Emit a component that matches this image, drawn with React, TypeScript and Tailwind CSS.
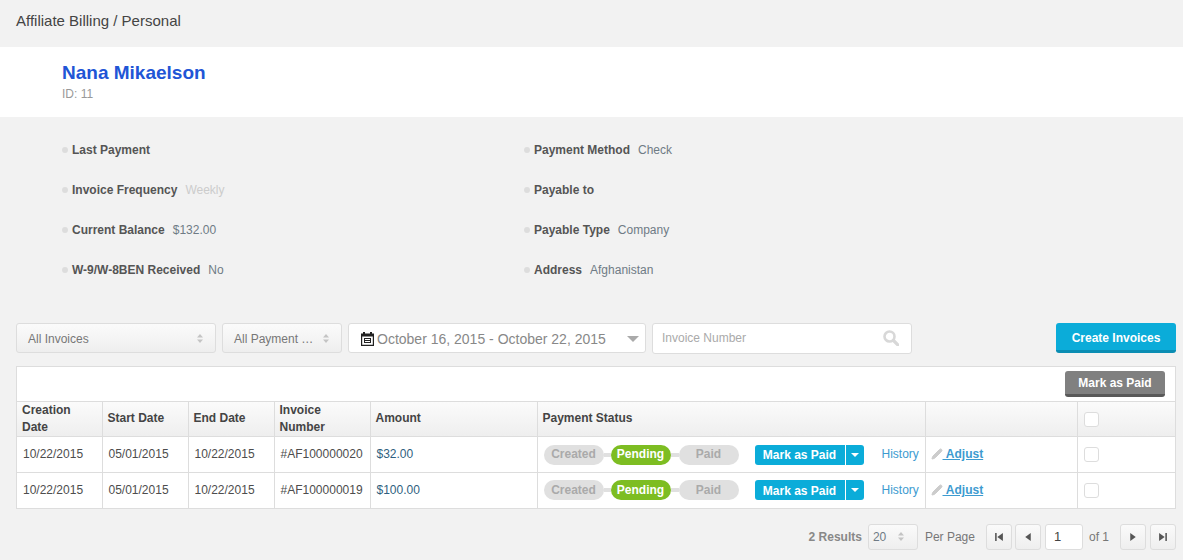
import React from "react";
import { Pencil } from "lucide-react";

const info = [
  [
    { label: "Last Payment", value: "" },
    { label: "Invoice Frequency", value: "Weekly", cls: "text-[#cccccc]" },
    { label: "Current Balance", value: "$132.00" },
    { label: "W-9/W-8BEN Received", value: "No" },
  ],
  [
    { label: "Payment Method", value: "Check" },
    { label: "Payable to", value: "" },
    { label: "Payable Type", value: "Company" },
    { label: "Address", value: "Afghanistan" },
  ],
];

const invoices = [
  { created: "10/22/2015", start: "05/01/2015", end: "10/22/2015", number: "#AF100000020", amount: "$32.00", height: "h-9" },
  { created: "10/22/2015", start: "05/01/2015", end: "10/22/2015", number: "#AF100000019", amount: "$100.00", height: "h-[35px]" },
];

const Updown = () => (
  <svg width="6" height="9" viewBox="0 0 6 9" className="shrink-0" fill="#c4c4c4">
    <path d="M3 0l3 3.4H0zM3 9L0 5.6h6z" />
  </svg>
);

const CalendarGlyph = () => (
  <svg width="13" height="14" viewBox="0 0 13 14" className="shrink-0" fill="#222222">
    <path d="M2 0h2v1.5h5V0h2v1.5h2V14H0V1.5h2zM1.2 4.5v8.3h10.6V4.5zM3 6h7v5H3zM4 7v1h5V7zm0 2v1h5V9z" fillRule="evenodd" />
  </svg>
);

const SearchGlyph = () => (
  <svg width="16" height="16" viewBox="0 0 16 16" fill="none" stroke="#d8d8d8" className="shrink-0">
    <circle cx="6.5" cy="6.5" r="5" strokeWidth="2.6" />
    <path d="M10.5 10.5l4.3 4.3" strokeWidth="3.2" strokeLinecap="round" />
  </svg>
);

const PagerButton = ({ d }: { d: string }) => (
  <button className="flex h-[26px] w-[26px] items-center justify-center rounded-[3px] border border-[#dddddd] bg-gradient-to-b from-[#fafafa] to-[#eeeeee]">
    <svg width="10" height="10" viewBox="0 0 9 9" fill="#555555">
      <path d={d} />
    </svg>
  </button>
);

const Stepper = () => (
  <div className="flex items-center">
    <span className="flex h-5 w-[60px] items-center justify-center rounded-full bg-[#e0e0e0] pb-px font-bold text-[#aaaaaa]">Created</span>
    <span className="h-1 w-[7px] bg-[#e0e0e0]" />
    <span className="flex h-5 w-[60px] items-center justify-center rounded-full bg-[#7dbd22] pb-px font-bold text-white">Pending</span>
    <span className="h-1 w-2 bg-[#e0e0e0]" />
    <span className="flex h-5 w-[60px] items-center justify-center rounded-full bg-[#e0e0e0] pb-px font-bold text-[#aaaaaa]">Paid</span>
  </div>
);

const Checkbox = () => <span className="block h-[15px] w-[15px] rounded-[3px] border border-[#dddddd] bg-white" />;

export default function App() {
  return (
    <div className="h-[560px] overflow-hidden bg-[#f2f2f2] font-['Liberation_Sans',Arial,sans-serif] text-xs text-[#666666]">
      <div className="flex h-[47px] items-center px-4 pb-[6px] text-[15px] text-[#444444]">Affiliate Billing / Personal</div>

      <div className="flex h-[70px] flex-col bg-white pl-[62px] pt-[14px]">
        <h1 className="text-[19px] font-bold leading-[24px] text-[#2155d6]">Nana Mikaelson</h1>
        <p className="pt-px text-xs leading-[16px] text-[#999999]">ID: 11</p>
      </div>

      <div className="flex pl-[62px] pt-[13px]">
        {info.map((col, i) => (
          <div key={i} className="w-[462px]">
            {col.map((row) => (
              <div key={row.label} className="flex h-10 items-center">
                <span className="mr-[4px] h-[6px] w-[6px] rounded-full bg-[#dddddd]" />
                <span className="font-bold text-[#555555]">{row.label}</span>
                {row.value && <span className={`ml-2 ${row.cls ?? "text-[#6f7b85]"}`}>{row.value}</span>}
              </div>
            ))}
          </div>
        ))}
      </div>

      <div className="mt-[33px] flex h-[30px] items-start pl-4 pr-[7px]">
        <div className="flex h-[30px] w-[200px] items-center justify-between rounded-[3px] border border-[#dddddd] bg-gradient-to-b from-[#fbfbfb] to-[#eeeeee] pl-[11px] pr-[12px] pt-px text-[#777777]">
          All Invoices
          <Updown />
        </div>
        <div className="ml-[6px] flex h-[30px] w-[120px] items-center justify-between rounded-[3px] border border-[#dddddd] bg-gradient-to-b from-[#fbfbfb] to-[#eeeeee] pl-[11px] pr-[12px] pt-px text-[#777777]">
          All Payment …
          <Updown />
        </div>
        <div className="ml-[6px] flex h-[30px] w-[298px] items-center rounded-[3px] border border-[#dddddd] bg-white pl-3 pr-[6px] pt-px text-sm text-[#888888]">
          <CalendarGlyph />
          <span className="ml-[3px]">October 16, 2015 - October 22, 2015</span>
          <span className="ml-auto h-0 w-0 border-x-[6px] border-t-[6px] border-x-transparent border-t-[#aaaaaa]" />
        </div>
        <div className="ml-[6px] flex h-[31px] w-[260px] items-center justify-between rounded-[3px] border border-[#dddddd] bg-white pb-[2px] pl-[9px] pr-3 text-[#aaaaaa]">
          Invoice Number
          <SearchGlyph />
        </div>
        <button className="ml-auto h-[30px] w-[120px] rounded-[3px] border-b-[3px] border-[#0a8db3] bg-[#0bacd9] pt-[2px] font-bold text-white">Create Invoices</button>
      </div>

      <div className="ml-4 mr-[7px] mt-[13px] border border-[#dddddd] bg-white">
        <div className="flex h-[34px] items-start justify-end pr-[10px] pt-[4px]">
          <button className="h-[26px] w-[100px] rounded-[3px] border-b-[3px] border-[#595959] bg-[#808080] pt-px font-bold text-white">Mark as Paid</button>
        </div>
        <table className="w-full table-fixed border-collapse">
          <colgroup>
            <col className="w-[85px]" />
            <col className="w-[86px]" />
            <col className="w-[86px]" />
            <col className="w-[96px]" />
            <col className="w-[167px]" />
            <col className="w-[388px]" />
            <col className="w-[152px]" />
            <col />
          </colgroup>
          <thead>
            <tr className="h-[35px] bg-gradient-to-b from-[#fbfbfb] to-[#eeeeee] text-left font-bold text-[#444444]">
              <th className="border-t border-[#dddddd] pl-[5px] pr-4 font-bold leading-[17px]">Creation Date</th>
              <th className="border border-b-0 border-[#dddddd] pb-[2px] pl-[5px] font-bold">Start Date</th>
              <th className="border border-b-0 border-[#dddddd] pb-[2px] pl-[5px] font-bold">End Date</th>
              <th className="border border-b-0 border-[#dddddd] pl-[5px] font-bold leading-[17px]">Invoice Number</th>
              <th className="border border-b-0 border-[#dddddd] pb-[2px] pl-[5px] font-bold">Amount</th>
              <th className="border border-b-0 border-[#dddddd] pb-[2px] pl-[5px] font-bold">Payment Status</th>
              <th className="border border-b-0 border-[#dddddd]" />
              <th className="border-t border-[#dddddd] pl-[6px]">
                <Checkbox />
              </th>
            </tr>
          </thead>
          <tbody>
            {invoices.map((row) => (
              <tr key={row.number} className={`${row.height} border-t border-[#dddddd] text-[#4d4d4d]`}>
                <td className="pb-px pl-[6px]">{row.created}</td>
                <td className="border-l border-[#dddddd] pb-px pl-[6px]">{row.start}</td>
                <td className="border-l border-[#dddddd] pb-px pl-[6px]">{row.end}</td>
                <td className="border-l border-[#dddddd] pb-px pl-[6px]">{row.number}</td>
                <td className="border-l border-[#dddddd] pb-px pl-[6px] text-[#2f5f80]">{row.amount}</td>
                <td className="border-l border-[#dddddd] pl-[6px]">
                  <div className="flex items-center">
                    <Stepper />
                    <div className="ml-4 flex h-5 w-[109px] overflow-hidden rounded-[3px] bg-[#0bacd9] font-bold text-white">
                      <span className="flex w-[90px] items-center justify-center pt-px">Mark as Paid</span>
                      <span className="flex flex-1 items-center justify-center border-l border-white">
                        <span className="h-0 w-0 border-x-[4px] border-t-[4px] border-x-transparent border-t-white" />
                      </span>
                    </div>
                    <span className="ml-[18px] pb-px text-[#3d9bd0]">History</span>
                  </div>
                </td>
                <td className="border-l border-[#dddddd] pb-px pl-[5px]">
                  <span className="flex items-center">
                    <Pencil size={12} fill="#cccccc" className="text-[#cccccc]" />
                    <span className="font-bold text-[#3d9bd0] underline">&nbsp;Adjust</span>
                  </span>
                </td>
                <td className="border-l border-[#dddddd] pl-[6px]">
                  <Checkbox />
                </td>
              </tr>
            ))}
          </tbody>
        </table>
      </div>

      <div className="mt-[15px] flex h-[26px] items-center justify-end pr-[7px] text-[#777777]">
        <span className="font-bold text-[#888888]">2 Results</span>
        <div className="ml-[6px] flex h-[26px] w-[50px] items-center justify-between rounded-[3px] border border-[#dddddd] bg-gradient-to-b from-[#fafafa] to-[#eeeeee] pl-1 pr-[13px] text-[#6f7b85]">
          20
          <Updown />
        </div>
        <span className="ml-[7px] mr-[11px]">Per Page</span>
        <div className="flex gap-[3px]">
          <PagerButton d="M1 1h1.4v7H1zM8 .8v7.4L3 4.5z" />
          <PagerButton d="M7 .8v7.4L2 4.5z" />
        </div>
        <div className="ml-[4px] flex h-[26px] w-[38px] items-center rounded-[3px] border border-[#dddddd] bg-white pl-2 text-[13px] text-[#444444]">1</div>
        <span className="ml-[6px] mr-[11px]">of 1</span>
        <div className="flex gap-1">
          <PagerButton d="M2 .8v7.4l5-3.7z" />
          <PagerButton d="M1 .8v7.4l5-3.7zM6.6 1H8v7H6.6z" />
        </div>
      </div>
    </div>
  );
}
